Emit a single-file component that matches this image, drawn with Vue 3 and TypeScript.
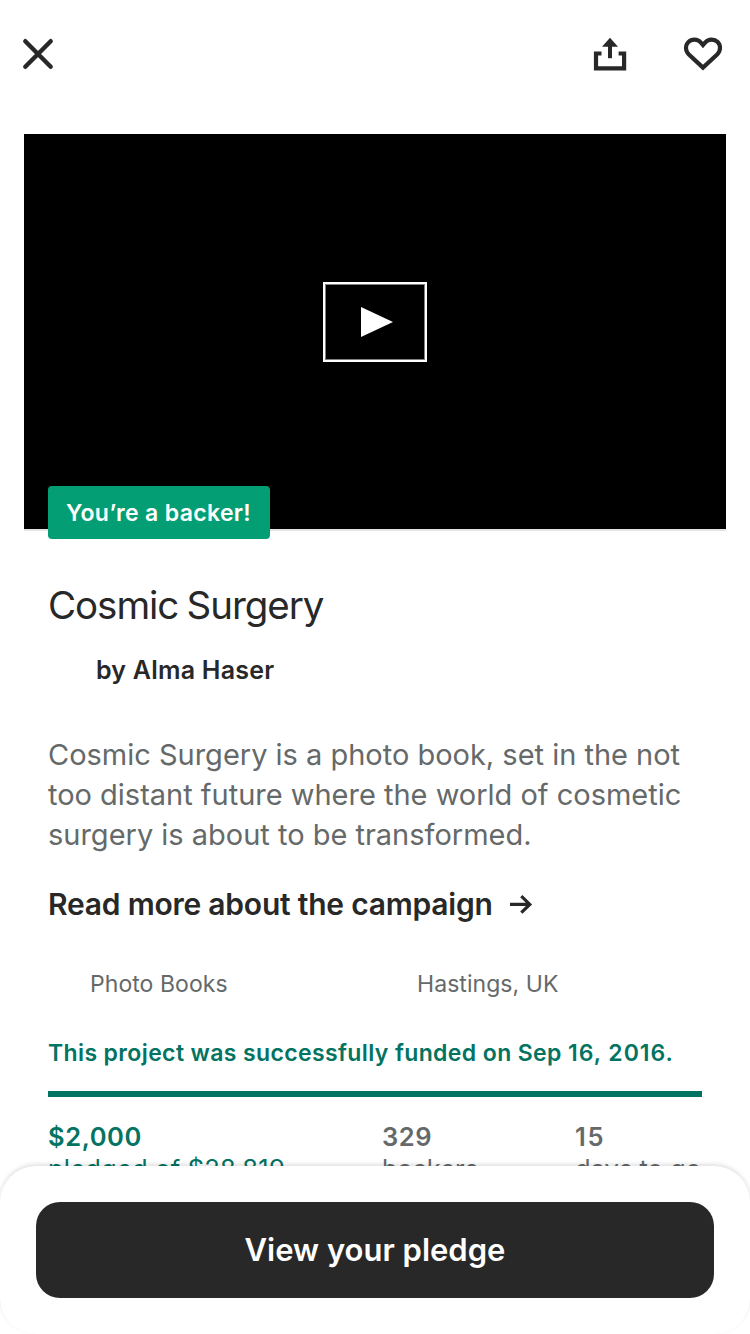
<script setup lang="ts">
interface Stat {
  value: string
  label: string
  kind: string
}

const stats: Stat[] = [
  { value: '$2,000', label: 'pledged of $28,819', kind: 'pledged' },
  { value: '329', label: 'backers', kind: 'backers' },
  { value: '15', label: 'days to go', kind: 'days' },
]
</script>

<template>
  <main class="screen">
    <header class="toolbar">
      <svg class="icon-close" viewBox="0 0 32 32" aria-label="Close">
        <path d="M3.3 3.2 28.7 28.8M28.7 3.2 3.3 28.8" fill="none" stroke="#282828" stroke-width="4.4" stroke-linecap="round" />
      </svg>
      <svg class="icon-share" viewBox="0 0 34 34" aria-label="Share">
        <path d="M8.5 16.5H3v14.8h28.1V16.5h-5.5" fill="none" stroke="#282828" stroke-width="4.2" />
        <path d="M17 8v13.2" fill="none" stroke="#282828" stroke-width="4" />
        <path d="M17 .7 25 9.7H9Z" fill="#282828" />
      </svg>
      <svg class="icon-heart" viewBox="0 0 40 36" aria-label="Save">
        <path d="M20 31.6 5.9 18.6C2.2 15 2.1 9.4 5.3 6.1 8.7 2.7 14.5 2.9 17.7 6.4L20 9 22.3 6.4C25.5 2.9 31.3 2.7 34.7 6.1 37.9 9.4 37.8 15 34.1 18.6Z" fill="none" stroke="#282828" stroke-width="4.2" />
      </svg>
    </header>

    <section class="media">
      <div class="play">
        <svg class="play-mark" viewBox="0 0 32 30"><path d="M0 0 32 15 0 30Z" fill="#fff" /></svg>
      </div>
      <span class="badge">You’re a backer!</span>
    </section>

    <article class="details">
      <h1 class="title">Cosmic Surgery</h1>
      <p class="author">by Alma Haser</p>
      <p class="blurb">
        Cosmic Surgery is a photo book, set in the not<br />
        too distant future where the world of cosmetic<br />
        surgery is about to be transformed.
      </p>
      <a class="more">
        <span class="more-text">Read more about the campaign</span>
        <svg class="arrow" viewBox="0 0 24 20">
          <path d="M1 10.4h20M12.3 2.2 20.8 10.4l-8.5 8.2" fill="none" stroke="#282828" stroke-width="3.2" />
        </svg>
      </a>
      <div class="meta">
        <span class="category">Photo Books</span>
        <span class="place">Hastings, UK</span>
      </div>
      <p class="funded">This project was successfully funded on Sep <span class="date">16, 2016.</span></p>
      <div class="progress"></div>
      <div class="stats">
        <div v-for="stat in stats" :key="stat.kind" class="stat" :class="stat.kind">
          <strong class="value">{{ stat.value }}</strong>
          <span class="label">{{ stat.label }}</span>
        </div>
      </div>
    </article>

    <footer class="sheet">
      <button class="pledge" type="button">View your pledge</button>
    </footer>
  </main>
</template>

<style>
body {
  margin: 0;
  background: #fff;
}
</style>

<style scoped>
.screen {
  position: relative;
  box-sizing: border-box;
  width: 750px;
  height: 1334px;
  overflow: hidden;
  background: #fff;
  color: #282828;
  font-family: Inter, "Liberation Sans", sans-serif;
  white-space: nowrap;
}
h1,
p {
  margin: 0;
}
.toolbar {
  display: flex;
  align-items: center;
  box-sizing: border-box;
  height: 108px;
  padding: 0 27px 0 22px;
}
.icon-close {
  width: 32px;
  height: 32px;
}
.icon-share {
  width: 34px;
  height: 34px;
  margin-left: auto;
}
.icon-heart {
  width: 40px;
  height: 36px;
  margin-left: 56px;
}
.media {
  position: relative;
  display: flex;
  align-items: center;
  justify-content: center;
  box-sizing: border-box;
  height: 397px;
  margin: 26px 24px 0;
  border-bottom: 2px solid #e4e4e4;
  background: #000;
  background-clip: padding-box;
}
.play {
  display: flex;
  align-items: center;
  justify-content: center;
  box-sizing: border-box;
  width: 104px;
  height: 80px;
  margin-top: -19px;
  border: 2px solid #fff;
  box-shadow: inset 0 0 0 1px rgba(255, 255, 255, 0.5);
}
.play-mark {
  width: 32px;
  height: 30px;
  margin-left: 3px;
}
.badge {
  position: absolute;
  top: 352px;
  left: 24px;
  box-sizing: border-box;
  width: 222px;
  height: 53px;
  padding-left: 18px;
  border-radius: 4px;
  background: #039e74;
  color: #fff;
  font-size: 23px;
  font-weight: 600;
  letter-spacing: 0.34px;
  line-height: 55px;
}
.details {
  padding: 50px 48px 0;
}
.title {
  font-size: 38.5px;
  font-weight: 400;
  letter-spacing: -1.05px;
  word-spacing: -1.5px;
  line-height: 48px;
}
.author {
  margin: 25px 0 0 48px;
  font-size: 25px;
  font-weight: 600;
  letter-spacing: 0.22px;
  line-height: 32px;
}
.blurb {
  margin-top: 49px;
  color: #656969;
  font-size: 29px;
  letter-spacing: -0.01px;
  line-height: 40px;
}
.more {
  display: flex;
  align-items: center;
  height: 40px;
  margin-top: 29px;
  font-size: 30px;
  font-weight: 600;
  letter-spacing: -0.22px;
  line-height: 40px;
}
.arrow {
  width: 24px;
  height: 20px;
  margin-left: 16px;
}
.meta {
  display: grid;
  grid-template-columns: 327px 1fr;
  margin-top: 44px;
  padding-left: 42px;
  color: #656969;
  font-size: 23px;
  letter-spacing: 0.06px;
  line-height: 32px;
}
.funded {
  margin-top: 37px;
  color: #037362;
  font-size: 23px;
  font-weight: 600;
  letter-spacing: 0.38px;
  line-height: 32px;
}
.date {
  letter-spacing: 1px;
}
.progress {
  height: 6px;
  margin-top: 22px;
  background: #037362;
}
.stats {
  display: grid;
  grid-template-columns: 334px 193px 1fr;
  margin-top: 24px;
  color: #656969;
  font-size: 25.5px;
  line-height: 32px;
}
.stat {
  display: flex;
  flex-direction: column;
}
.value {
  font-weight: 600;
  letter-spacing: 0.6px;
}
.pledged {
  color: #037362;
  letter-spacing: 0.2px;
}
.days .value {
  letter-spacing: 1.6px;
}
.sheet {
  position: absolute;
  bottom: 0;
  left: 0;
  box-sizing: border-box;
  width: 750px;
  height: 168px;
  padding: 36px;
  border-radius: 36px;
  background: #fff;
  box-shadow: 0 -2px 4px rgba(0, 0, 0, 0.12);
}
.pledge {
  display: block;
  width: 678px;
  height: 96px;
  padding: 0;
  border: 0;
  border-radius: 24px;
  background: #282828;
  color: #fff;
  font: 600 31px/96px Inter, "Liberation Sans", sans-serif;
}
</style>
